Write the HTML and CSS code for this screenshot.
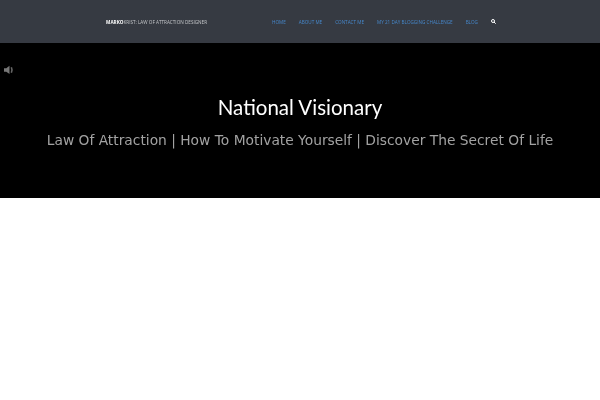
FILE: index.html
```html
<!DOCTYPE html>
<html lang="en">
<head>
<meta charset="utf-8">
<title>National Visionary</title>
<link rel="stylesheet" href="styles.css">
</head>
<body>
<header class="site-header">
  <div class="brand"><b>MARKO</b>KRIST: LAW OF ATTRACTION DESIGNER</div>
  <nav class="nav">
    <a href="#">HOME</a>
    <a href="#">ABOUT ME</a>
    <a href="#">CONTACT ME</a>
    <a href="#">MY 21 DAY BLOGGING CHALLENGE</a>
    <a href="#">BLOG</a>
    <svg class="search" viewBox="0 0 10 10" width="5" height="5"><circle cx="4" cy="4" r="3" fill="none" stroke="#fff" stroke-width="2"/><path d="M6 6l3.4 3.4" stroke="#fff" stroke-width="2"/></svg>
  </nav>
</header>
<section class="hero">
  <svg class="sound" viewBox="0 0 12 10" width="11" height="10"><path d="M0 3h2.500L6 .5v9L2.500 7H0z" fill="#777"/><path d="M8 2q1.500 3 0 6" fill="none" stroke="#666" stroke-width="1.800"/></svg>
  <h1 class="title">National Visionary</h1>
  <p class="tagline">Law Of Attraction | How To Motivate Yourself | Discover The Secret Of Life</p>
</section>
</body>
</html>
```
FILE: styles.css
```css
html, body { margin: 0; padding: 0; background: #fff; }
body { font-family: "DejaVu Sans", sans-serif; }
.site-header {
  height: 43px;
  background: #363a42;
  display: flex;
  align-items: center;
  padding-left: 106px;
  box-sizing: border-box;
}
.brand {
  font-family: "Open Sans", sans-serif;
  font-size: 4.650px;
  color: #c4c6c9;
  width: 166px;
  white-space: nowrap;
  filter: blur(.2px);
}
.brand b { color: #fff; }
.nav {
  display: flex;
  align-items: center;
  gap: 13px;
  font-family: "Open Sans", sans-serif;
  font-size: 4.630px;
  white-space: nowrap;
  filter: blur(.2px);
}
.nav a { color: #4688cc; text-decoration: none; }
.search { display: block; }
.hero {
  position: relative;
  height: 155px;
  background: #000;
  text-align: center;
  overflow: hidden;
}
.sound { position: absolute; left: 4px; top: 22px; filter: blur(.4px); }
.title {
  margin: 0;
  padding-top: 50px;
  font-family: "Lato", sans-serif;
  font-weight: 400;
  font-size: 20.500px;
  line-height: 28px;
  color: #fff;
  filter: blur(.2px);
}
.tagline {
  margin: 10px 0 0;
  font-size: 13.800px;
  line-height: 18px;
  color: #a2a2a2;
  filter: blur(.2px);
}
```
